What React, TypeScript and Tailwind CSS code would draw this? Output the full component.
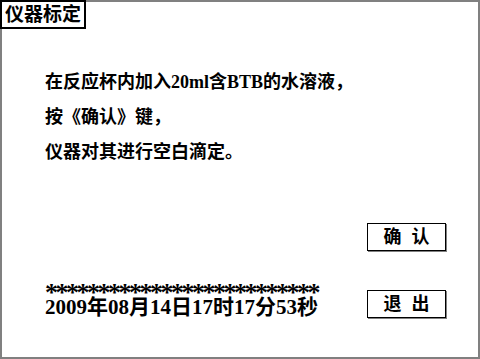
import React from 'react';

const font = "font-['Liberation_Serif','Noto_Sans_CJK_SC',serif] font-bold text-black";

const PanelButton: React.FC<{ left: string; right: string; className?: string }> = ({ left, right, className = '' }) => (
  <div
    className={`w-[79px] h-[28px] border border-black shadow-[1px_1px_0_#808080] bg-white flex items-center justify-center gap-[10px] text-[18px] leading-none ${className}`}
  >
    <span>{left}</span>
    <span>{right}</span>
  </div>
);

const App: React.FC = () => {
  const stars = '*'.repeat(26);

  return (
    <div className={`w-[480px] h-[359px] bg-white ${font}`}>
      <div className="w-full h-full border-2 border-[#808080] flex flex-col">
        {/* Title */}
        <div className="-mt-[2px] -ml-[2px] w-[86px] h-[29px] border-2 border-black bg-white flex items-center justify-center text-[19px] leading-none">
          仪器标定
        </div>

        {/* Instructions */}
        <div className="mt-[36px] pl-[43px] text-[18px] leading-[35px]">
          <div>在反应杯内加入20ml含BTB的水溶液，</div>
          <div>按《确认》键，</div>
          <div>仪器对其进行空白滴定。</div>
        </div>

        {/* Confirm */}
        <div className="mt-[53px] flex justify-end pr-[32px]">
          <PanelButton left="确" right="认" />
        </div>

        {/* Status + exit */}
        <div className="mt-[37px] flex items-start justify-between pl-[43px] pr-[32px]">
          <div className="flex flex-col">
            <div className="text-[26px] leading-[10px] h-[10px] tracking-[-2.5px]">{stars}</div>
            <div className="text-[21px] leading-[18px]">2009年08月14日17时17分53秒</div>
          </div>
          <PanelButton left="退" right="出" className="mt-[2px]" />
        </div>
      </div>
    </div>
  );
};

export default App;
